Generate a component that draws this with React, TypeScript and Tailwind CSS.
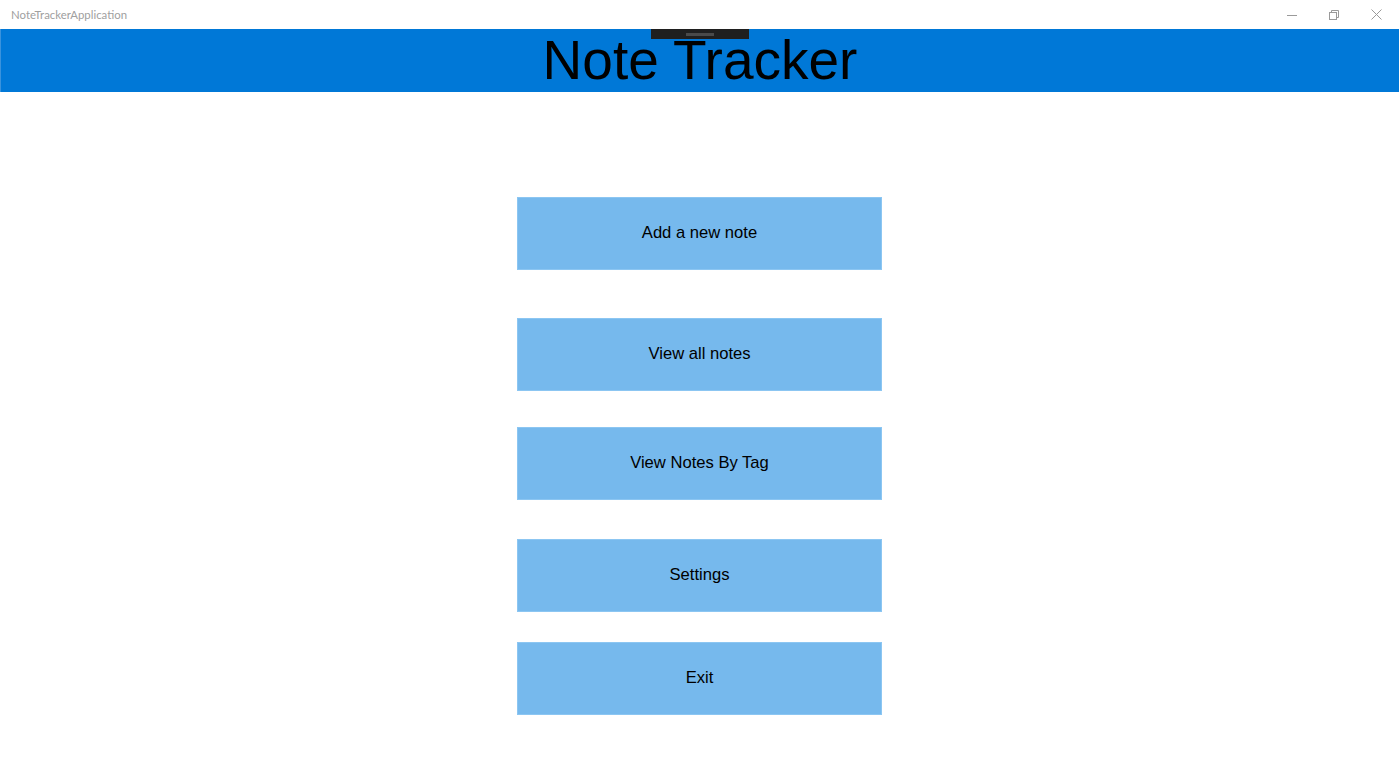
import React from "react";

const Btn = ({ label, className = "" }: { label: string; className?: string }) => (
  <div
    className={`w-[365px] h-[73px] bg-[#76b9ed] border border-[#8cc6f2] flex items-center justify-center pb-[1px] text-[16.6px] text-black ${className}`}
    style={{ fontFamily: '"Liberation Sans", Arial, sans-serif' }}
  >
    {label}
  </div>
);

export default function App() {
  return (
    <div className="w-[1399px] h-[759px] bg-white flex flex-col overflow-hidden">
      <div className="h-[29px] flex items-center justify-between shrink-0">
        <span
          className="pl-[11px] text-[11.4px] text-[#a0a0a0]"
          style={{ fontFamily: 'Lato, "Open Sans", sans-serif' }}
        >
          NoteTrackerApplication
        </span>
        <div className="flex items-center h-full">
          <div className="w-[42px] h-full flex items-center justify-center">
            <svg width="10" height="10" viewBox="0 0 10 10">
              <line x1="0" y1="5.5" x2="10" y2="5.5" stroke="#9a9a9a" strokeWidth="1" />
            </svg>
          </div>
          <div className="w-[41px] h-full flex items-center justify-center">
            <svg width="10" height="10" viewBox="0 0 10 10" fill="none" stroke="#9a9a9a" strokeWidth="1">
              <rect x="0.5" y="2.5" width="7" height="7" />
              <path d="M2.5 2.5 V0.5 H9.5 V7.5 H7.5" />
            </svg>
          </div>
          <div className="w-[44px] h-full flex items-center justify-center mr-[1px]">
            <svg width="11" height="11" viewBox="0 0 11 11" stroke="#9a9a9a" strokeWidth="1">
              <line x1="0.5" y1="0.5" x2="10.5" y2="10.5" />
              <line x1="10.5" y1="0.5" x2="0.5" y2="10.5" />
            </svg>
          </div>
        </div>
      </div>
      <div className="relative h-[63px] bg-[#0078d7] border-l border-[#3a93dd] flex items-center justify-center shrink-0">
        <div className="absolute left-[650px] top-0 w-[98px] h-[10px] bg-[#1f1f1f] flex justify-center items-center">
          <div className="w-[28px] h-[3px] bg-[#4a4a4a] mt-[1px]" />
        </div>
        <span
          className="text-[55px] leading-none text-black"
          style={{ fontFamily: '"Liberation Sans", Arial, sans-serif' }}
        >
          Note Tracker
        </span>
      </div>
      <div className="flex flex-col items-center">
        <Btn label="Add a new note" className="mt-[105px]" />
        <Btn label="View all notes" className="mt-[48px]" />
        <Btn label="View Notes By Tag" className="mt-[36px]" />
        <Btn label="Settings" className="mt-[39px]" />
        <Btn label="Exit" className="mt-[30px]" />
      </div>
    </div>
  );
}
